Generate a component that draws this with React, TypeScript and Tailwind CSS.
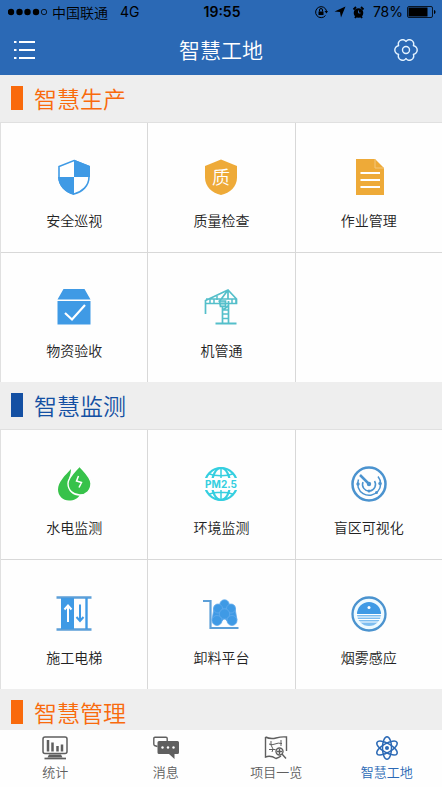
import type { ReactNode } from "react";

const BLUE = "#3f9ae5";
const CYAN = "#35cfe0";

function ShieldIcon() {
  return (
    <svg width="36" height="36" viewBox="0 0 36 36">
      <path d="M18 1.5 33 7.5V18c0 9-7 15-15 17C10 33 3 27 3 18V7.5z" fill="#fff" stroke={BLUE} strokeWidth="1.6" />
      <path d="M18 .8 34 7v11H18zM18 18v18C9.500 33.500 2.500 27 2 18z" fill={BLUE} />
    </svg>
  );
}

function QualityIcon() {
  return (
    <svg width="36" height="36" viewBox="0 0 36 36">
      <path d="M18 .5 34 7v11.500c0 9-7 15.500-16 17.500C9 34 2 27.500 2 18.500V7z" fill="#eeaa38" />
      <text x="18" y="24.500" textAnchor="middle" fontSize="18" fill="#fff">质</text>
    </svg>
  );
}

function DocumentIcon() {
  return (
    <svg width="36" height="36" viewBox="0 0 36 36">
      <path d="M5 0h19l9 9v27H5z" fill="#eeaa38" />
      <path d="M24 0v9h9" fill="none" stroke="#f4c77a" strokeWidth="1" />
      <path d="M9.500 14H29M9.500 21H29M9.500 28H29" stroke="#fff" strokeWidth="2.200" />
    </svg>
  );
}

function BoxIcon() {
  return (
    <svg width="36" height="36" viewBox="0 0 36 36">
      <path d="M7.500 0h21l6 10.500h-33zM1.500 12H34.500V35.500H1.500z" fill={BLUE} />
      <path d="m9 24 7 6.500L29 16" fill="none" stroke="#fff" strokeWidth="2.200" />
    </svg>
  );
}

function CraneIcon() {
  return (
    <svg width="36" height="36" viewBox="0 0 36 36" fill="none" stroke="#54bfca" strokeWidth="1.700">
      <path d="M2.500 25V11.500L25 1l8.500 9v4.500h-31M3 10h30.500M25 1 16 13M25 1v9" />
      <path d="M7 10v4.500M11 10v4.500M29 10v4.500M33 10v4.500M14 7v4" strokeWidth="1.500" />
      <path d="M16.500 12h6v5.500h-5z" fill="#5fc3cd" fillOpacity=".5" />
      <path d="M19.500 17v17M25.500 12v22M19.500 21h6M19.500 25h6M19.500 29.500h6M20 21l5-4" />
      <path d="M12.500 34.500H33.500" strokeWidth="2" />
    </svg>
  );
}

function DropsIcon() {
  return (
    <svg width="36" height="36" viewBox="0 0 36 36">
      <path d="M15 3C9 9.500 2 16 2 23.500 2 30 7 34.500 13 34.500c5 0 9-2 11-6C17 28 12 23 12.500 15.500 13 11 15 8 15 3z" fill="#37c24a" />
      <path d="M23.500 0C19 5.500 12 11 12 17.500 12 24.500 17.500 29 23.800 29S35 24.500 35 17.500C35 11 28 5.500 23.500 0z" fill="#37c24a" stroke="#fff" strokeWidth="1.400" />
      <path d="m22.500 10-2 5 5 1.500-2.500 5" fill="none" stroke="#fff" strokeWidth="1.500" />
    </svg>
  );
}

function AirIcon() {
  return (
    <svg width="36" height="36" viewBox="0 0 36 36">
      <g fill="none" stroke={CYAN} strokeWidth="2.200">
        <circle cx="18" cy="18" r="16" />
        <ellipse cx="18" cy="18" rx="9" ry="16" />
        <path d="M18 2v32M5 7.500c7 3 19 3 26 0M5 28.500c7-3 19-3 26 0" strokeWidth="1.500" />
      </g>
      <path d="M0 12h36v12H0z" fill="#fff" />
      <text x="18" y="22" textAnchor="middle" fontSize="10" fontWeight="700" fill={CYAN} fontFamily="Inter, sans-serif">PM2.5</text>
    </svg>
  );
}

function RadarIcon() {
  return (
    <svg width="36" height="36" viewBox="0 0 36 36" fill="none" stroke="#4b93cf">
      <circle cx="18" cy="18" r="16.500" strokeWidth="2.500" />
      <path d="M27 10.500A11.500 11.500 0 1 1 7.500 13.500" strokeWidth="1.500" />
      <path d="M23.500 15A6.500 6.500 0 1 1 12 16" strokeWidth="1.500" />
      <path d="m18 18-9-9" strokeWidth="2.500" />
      <g fill="#4b93cf" stroke="none">
        <circle cx="18" cy="18" r="2.200" />
        <circle cx="7" cy="18" r="1.700" />
        <circle cx="29" cy="17.500" r="1.700" />
        <circle cx="18" cy="25" r="1.500" />
        <circle cx="25.500" cy="26.500" r="1.500" />
      </g>
    </svg>
  );
}

function ElevatorIcon() {
  return (
    <svg width="36" height="36" viewBox="0 0 36 36" fill="none">
      <path d="M.5 1.500h35M.5 33.500h35" stroke="#5c9fd8" strokeWidth="2.400" />
      <path d="M5 2h13v31H5z" fill={BLUE} />
      <path d="M30.500 2v31" stroke={BLUE} strokeWidth="2.400" />
      <path d="M12 26V9.500M8.500 13.500 12 9.500l3.500 4" stroke="#fff" strokeWidth="2" />
      <path d="M24 8.500V25M20.500 21l3.500 4 3.500-4" stroke={BLUE} strokeWidth="2" />
    </svg>
  );
}

function CartIcon() {
  return (
    <svg width="36" height="36" viewBox="0 0 36 36">
      <path d="M0 5h7.500v27H35.500" fill="none" stroke="#5c9fd8" strokeWidth="2.200" />
      <g fill={BLUE} stroke="#62abec" strokeWidth=".8">
        <path d="m11 12-2 12 5 5 6-5 1.500-3 1.500 3 6 5 5-5-2-12-5-3H17z" />
        <circle cx="21.500" cy="8.500" r="4.700" />
        <circle cx="15" cy="12.500" r="4.500" />
        <circle cx="28" cy="12.500" r="4.500" />
        <circle cx="21.500" cy="18" r="5.200" />
        <circle cx="14" cy="24.500" r="5" />
        <circle cx="29" cy="24.500" r="5" />
      </g>
      <path d="m21.500 24 2.500 5.500h-5z" fill="#fff" />
    </svg>
  );
}

function SmokeIcon() {
  return (
    <svg width="36" height="36" viewBox="0 0 36 36">
      <circle cx="18" cy="18" r="16.500" fill="#eefaff" stroke="#4b93cf" strokeWidth="2.300" />
      <path d="M6 18a12 12 0 0 1 24 0z" fill={BLUE} />
      <path d="M6 18a12 12 0 0 0 24 0z" fill="#7dbdf0" />
      <path d="M5 18.500h26M5 21h26M6 23.500h24M8 26h20" stroke="#fff" strokeWidth="1" />
      <circle cx="18" cy="11.500" r="1.500" fill="#fff" />
    </svg>
  );
}

function StatsIcon() {
  return (
    <svg width="26" height="24" viewBox="0 0 26 24" fill="none" stroke="currentColor">
      <rect x="1" y="1" width="24" height="16.500" rx="2" strokeWidth="1.500" />
      <path d="M6 4v11.500M10.500 6.500v9M15.500 10v5.500M20 8.500v7" strokeWidth="2.500" />
      <path d="M7 18.500h12l1.500 3h-15z" fill="currentColor" stroke="none" />
      <path d="M2.500 22.500h21.500" strokeWidth="1.700" />
    </svg>
  );
}

function MessageIcon() {
  return (
    <svg width="26" height="24" viewBox="0 0 26 24">
      <path d="M4.500 10.500 1.500 9.500Q.8 9 .8 8V2.500Q.8 1.200 2 1.200h11Q14.200 1.200 14.200 2.500V5" fill="none" stroke="currentColor" strokeWidth="1.400" />
      <path d="M6 5h18.500Q26 5 26 6.500v10Q26 18 24.500 18H21.500v5L16 18H6Q4.500 18 4.500 16.500v-10Q4.500 5 6 5z" fill="currentColor" />
      <g fill="#fff">
        <circle cx="9.500" cy="11.500" r="1.200" />
        <circle cx="15" cy="11.500" r="1.200" />
        <circle cx="20.500" cy="11.500" r="1.200" />
      </g>
    </svg>
  );
}

function MapIcon() {
  return (
    <svg width="26" height="24" viewBox="0 0 26 24" fill="none" stroke="currentColor" strokeWidth="1.400">
      <path d="M2.500 1q5 2.500 10.500 1T23.500 1v14M2.500 1v20q5-2 10.500 1.500 3-1 5-2.500" />
      <path d="M6 8q3 1.500 6 0t7-.5M8 5v4l2 4-1 3M6 13.500h6.500M18 4v6" strokeWidth="1" />
      <circle cx="16.500" cy="15.500" r="3.500" />
      <path d="m19 18 4 4.500M14 15.500h5M16.500 13v5" />
    </svg>
  );
}

function AtomIcon() {
  return (
    <svg width="26" height="24" viewBox="0 0 26 24" fill="none" stroke="currentColor" strokeWidth="1.500">
      <ellipse cx="13" cy="12" rx="4.500" ry="11.200" />
      <ellipse cx="13" cy="12" rx="4.500" ry="11.500" transform="rotate(60 13 12)" />
      <ellipse cx="13" cy="12" rx="4.500" ry="11.500" transform="rotate(120 13 12)" />
      <circle cx="13" cy="12" r="2" fill="currentColor" stroke="none" />
    </svg>
  );
}

// six-lobed gear outline, lobes a little wider than the notches
const gearPoints = Array.from({ length: 73 }, (_, i) => {
  const t = (i * 5 * Math.PI) / 180;
  const a = t + 0.11 * Math.sin(6 * t);
  const r = 9.9 + 1.3 * Math.cos(6 * t);
  return `${(12 + r * Math.cos(a)).toFixed(2)},${(12 + r * Math.sin(a)).toFixed(2)}`;
}).join(" ");

function StatusBar() {
  return (
    <div className="flex h-6 items-center justify-between pr-1.5 pl-2 text-sm text-black">
      <div className="flex flex-1 items-center">
        <svg width="40" height="8" viewBox="0 0 40 8" className="mr-1">
          <circle cx="3" cy="4" r="3.200" />
          <circle cx="11.500" cy="4" r="3.200" />
          <circle cx="19.500" cy="4" r="3.200" />
          <circle cx="28" cy="4" r="3.200" />
          <circle cx="36" cy="4" r="2.700" fill="none" stroke="#000" strokeWidth=".8" />
        </svg>
        <span>中国联通</span>
        <span className="ml-3 font-[Inter,sans-serif] font-normal">4G</span>
      </div>
      <span className="font-[Inter,sans-serif] font-semibold">19:55</span>
      <div className="flex flex-1 items-center justify-end gap-1">
        <div className="flex items-center gap-1.5 pr-1">
          <svg width="14" height="14" viewBox="0 0 14 14" fill="none" stroke="#000">
            <path d="M11.500 10.500A5.500 5.500 0 1 1 12.500 6" />
            <path d="m10.500 6 2 2.500L14 6z" fill="#000" stroke="none" />
            <path d="M4.500 6.500h5V10h-5z" fill="#000" stroke="none" />
            <path d="M5.500 6.500V5a1.500 1.500 0 0 1 3 0v1.500" />
          </svg>
          <svg width="12" height="12" viewBox="0 0 12 12">
            <path d="M11.500.5 7 11.500 6 6 .5 5.500z" />
          </svg>
          <svg width="13" height="13" viewBox="0 0 13 13">
            <circle cx="6.500" cy="7" r="4.800" />
            <path d="M1.500 3.500 4 1M9 1l2.500 2.500M3 12l1-1.500M10 12l-1-1.500" stroke="#000" strokeWidth="1.800" />
            <path d="M6.500 4.500V7H8.500" fill="none" stroke="#2b69b5" strokeWidth=".9" />
          </svg>
        </div>
        <span className="font-[Inter,sans-serif] font-normal">78%</span>
        <svg width="29" height="12" viewBox="0 0 29 12">
          <rect x=".5" y=".5" width="25" height="11" rx="1.500" fill="none" stroke="#000" strokeWidth=".8" />
          <path d="M1.500 1.500h19v9h-19zM27 4c2 .5 2 3.500 0 4z" />
        </svg>
      </div>
    </div>
  );
}

type Item = { label: string; icon: ReactNode };

function SectionTitle({ title, color }: { title: string; color: "orange" | "blue" }) {
  return (
    <h2
      className={`flex h-[47px] items-center gap-[11px] pb-0.5 pl-[11px] text-[23px] leading-8 font-[350] ${
        color === "orange" ? "text-[#f96a0c]" : "text-[#1450a3]"
      }`}
    >
      <span className="h-6 w-3 bg-current" />
      {title}
    </h2>
  );
}

function ItemGrid({ items }: { items: Item[] }) {
  return (
    <div className="grid grid-cols-3 gap-px border-t border-l border-[#e0e0e0] bg-[#d8d8d8]">
      {items.map((item) => (
        <button key={item.label} className="flex flex-col items-center bg-[#fefefe] pt-9 pb-[22px] text-[#222]">
          {item.icon}
          <span className="mt-[15px] text-sm leading-5">{item.label}</span>
        </button>
      ))}
      {items.length % 3 !== 0 && <div className="bg-[#fefefe]" />}
    </div>
  );
}

const production: Item[] = [
  { label: "安全巡视", icon: <ShieldIcon /> },
  { label: "质量检查", icon: <QualityIcon /> },
  { label: "作业管理", icon: <DocumentIcon /> },
  { label: "物资验收", icon: <BoxIcon /> },
  { label: "机管通", icon: <CraneIcon /> },
];

const monitoring: Item[] = [
  { label: "水电监测", icon: <DropsIcon /> },
  { label: "环境监测", icon: <AirIcon /> },
  { label: "盲区可视化", icon: <RadarIcon /> },
  { label: "施工电梯", icon: <ElevatorIcon /> },
  { label: "卸料平台", icon: <CartIcon /> },
  { label: "烟雾感应", icon: <SmokeIcon /> },
];

const tabs: Item[] = [
  { label: "统计", icon: <StatsIcon /> },
  { label: "消息", icon: <MessageIcon /> },
  { label: "项目一览", icon: <MapIcon /> },
  { label: "智慧工地", icon: <AtomIcon /> },
];

export default function App() {
  return (
    <div className="flex h-screen flex-col bg-[#eeeeee] font-['Noto_Sans_CJK_SC',sans-serif] font-[350]">
      <header className="bg-[#2b69b5]">
        <StatusBar />
        <div className="grid h-[51px] grid-cols-[1fr_auto_1fr] items-center pr-6 pl-3 text-white">
          <button aria-label="菜单" className="justify-self-start">
            <svg width="25" height="24" viewBox="0 0 25 24" stroke="#fff" strokeWidth="2.200">
              <path d="M2 4h2.500M7 4h16M2 12h2.500M7 12h16M2 20h2.500M7 20h16" />
            </svg>
          </button>
          <h1 className="pb-0.5 pl-3 text-[21px] leading-7">智慧工地</h1>
          <button aria-label="设置" className="justify-self-end">
            <svg width="24" height="24" viewBox="0 0 24 24" fill="none" stroke="#e4f3ff" strokeWidth="1.400">
              <polygon points={gearPoints} />
              <circle cx="12" cy="12" r="3.500" />
            </svg>
          </button>
        </div>
      </header>

      <main className="min-h-0 flex-1 overflow-y-auto [scrollbar-width:none]">
        <SectionTitle title="智慧生产" color="orange" />
        <ItemGrid items={production} />
        <SectionTitle title="智慧监测" color="blue" />
        <ItemGrid items={monitoring} />
        <SectionTitle title="智慧管理" color="orange" />
      </main>

      <nav className="grid grid-cols-4 bg-[#fefefe] pt-1.5 pb-1.5">
        {tabs.map((tab) => (
          <a
            key={tab.label}
            href="#"
            className={`flex flex-col items-center ${tab.label === "智慧工地" ? "text-[#2b69b5]" : "text-[#5f5f5f]"}`}
          >
            {tab.icon}
            <span className="mt-0.5 text-[13px] leading-[19px]">{tab.label}</span>
          </a>
        ))}
      </nav>
    </div>
  );
}
